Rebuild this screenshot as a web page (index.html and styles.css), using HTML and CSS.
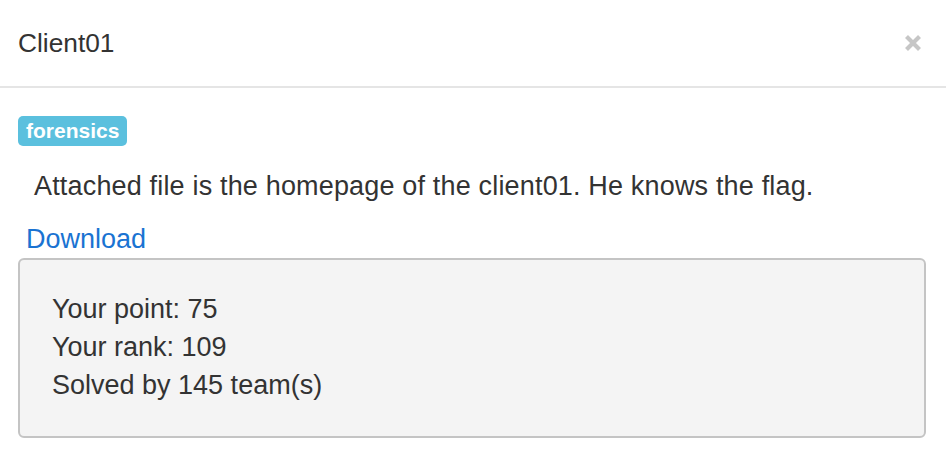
FILE: index.html
```html
<!DOCTYPE html>
<html>
<head>
<meta charset="utf-8">
<link rel="stylesheet" href="styles.css">
</head>
<body>
<div class="modal">
  <div class="modal-header">
    <h4 class="modal-title">Client01</h4>
    <span class="close" aria-label="Close">
      <svg width="18" height="18" viewBox="0 0 18 18"><path d="M2.5 2.5 L15.5 15.5 M15.5 2.5 L2.5 15.5" stroke="#c6c6c6" stroke-width="4.2" stroke-linecap="butt"/></svg>
    </span>
  </div>
  <div class="modal-body">
    <span class="badge">forensics</span>
    <p class="desc">Attached file is the homepage of the client01. He knows the flag.</p>
    <a class="download" href="#">Download</a>
    <div class="well">
      <div class="stat">Your point: 75</div>
      <div class="stat">Your rank: 109</div>
      <div class="stat">Solved by 145 team(s)</div>
    </div>
  </div>
</div>
</body>
</html>
```
FILE: styles.css
```css
html, body {
  margin: 0;
  padding: 0;
  background: #ffffff;
}
body {
  font-family: "Liberation Sans", Arial, sans-serif;
  font-size: 27px;
  color: #333333;
}
.modal {
  width: 946px;
}
.modal-header {
  display: flex;
  justify-content: space-between;
  align-items: center;
  padding: 24px 24px 24px 18px;
  border-bottom: 2px solid #e5e5e5;
}
.modal-title {
  margin: 0;
  font-size: 26.3px;
  font-weight: normal;
  line-height: 38px;
  color: #333333;
}
.close {
  display: flex;
  width: 18px;
  height: 18px;
}
.modal-body {
  padding: 28px 20px 0 18px;
}
.badge {
  display: inline-block;
  background: #5bc0de;
  color: #ffffff;
  font-weight: bold;
  font-size: 21px;
  line-height: 30px;
  padding: 0 8px;
  border-radius: 5px;
  vertical-align: top;
}
.desc {
  margin: 20px 0 0 16px;
  line-height: 38px;
  letter-spacing: 0.17px;
}
.download {
  display: block;
  margin: 15px 0 0 8px;
  line-height: 38px;
  color: #1a73d2;
  text-decoration: none;
}
.well {
  margin-top: 0;
  background: #f4f4f4;
  border: 2px solid #c4c4c4;
  border-radius: 6px;
  padding: 31px 32px 32px 32px;
}
.stat {
  line-height: 37.8px;
}
```
